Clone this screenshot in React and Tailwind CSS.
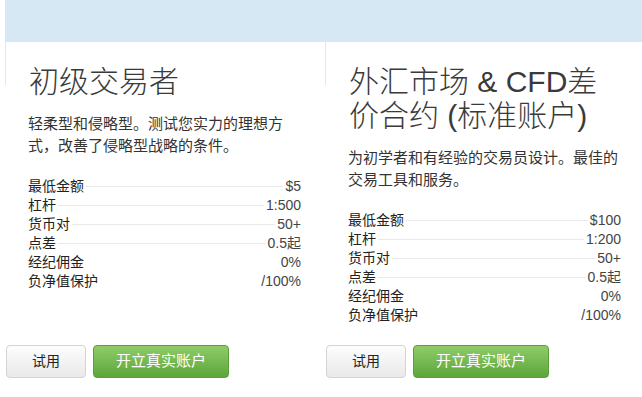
import React from 'react'

const plans = [
  {
    title: ['初级交易者'],
    desc: ['轻柔型和侵略型。测试您实力的理想方', '式，改善了侵略型战略的条件。'],
    rows: [
      ['最低金额', '$5'],
      ['杠杆', '1:500'],
      ['货币对', '50+'],
      ['点差', '0.5起'],
      ['经纪佣金', '0%'],
      ['负净值保护', '/100%'],
    ],
  },
  {
    title: ['外汇市场 & CFD差', '价合约 (标准账户)'],
    desc: ['为初学者和有经验的交易员设计。最佳的', '交易工具和服务。'],
    rows: [
      ['最低金额', '$100'],
      ['杠杆', '1:200'],
      ['货币对', '50+'],
      ['点差', '0.5起'],
      ['经纪佣金', '0%'],
      ['负净值保护', '/100%'],
    ],
  },
]

const font = { fontFamily: '"Liberation Sans", "Noto Sans CJK SC", sans-serif' }

function PlanCard({ plan }) {
  return (
    <div className="flex w-[320px] shrink-0">
      <div className="w-px h-[43px] bg-[#dde8f0] shrink-0" />
      <div className="flex flex-col flex-1">
        <div className="pl-[22px] pr-[24px] pt-[23px]">
          <h2 className="text-[30px] leading-[34px] text-[#3a3a3a] font-light pl-[1px]">
            {plan.title.map((t) => (
              <div key={t}>{t}</div>
            ))}
          </h2>
          <p className="mt-[14px] text-[15px] leading-[22px] text-[#333]">
            {plan.desc.map((d) => (
              <span key={d} className="block">{d}</span>
            ))}
          </p>
          <div className="mt-[20px]">
            {plan.rows.map(([k, v], i) => (
              <div key={k} className="flex items-center h-[19px] text-[14px] text-[#222]">
                <span>{k}</span>
                <div className={`flex-1 h-px mx-[2px] ${i < 4 ? 'bg-[#e9e9e9]' : ''}`} />
                <span className="text-[#444]">{v}</span>
              </div>
            ))}
          </div>
        </div>
        <div className="mt-auto pt-[20px] flex gap-[7px]">
          <button className="w-[80px] h-[33px] rounded-[4px] border border-[#d4d4d4] bg-gradient-to-b from-[#fdfdfd] to-[#e9e9e9] text-[14px] text-[#222]">
            试用
          </button>
          <button className="w-[136px] h-[33px] rounded-[4px] border border-[#5c9e3c] bg-gradient-to-b from-[#8fcc68] to-[#5ca63a] text-[15px] text-white">
            开立真实账户
          </button>
        </div>
      </div>
    </div>
  )
}

export default function App() {
  return (
    <div className="w-[642px] h-[397px] overflow-hidden bg-white pl-[5px] pb-[19px]" style={font}>
      <div className="h-[42px] bg-[#d6e8f4]" />
      <div className="flex">
        {plans.map((p, i) => (
          <PlanCard key={i} plan={p} />
        ))}
      </div>
    </div>
  )
}
